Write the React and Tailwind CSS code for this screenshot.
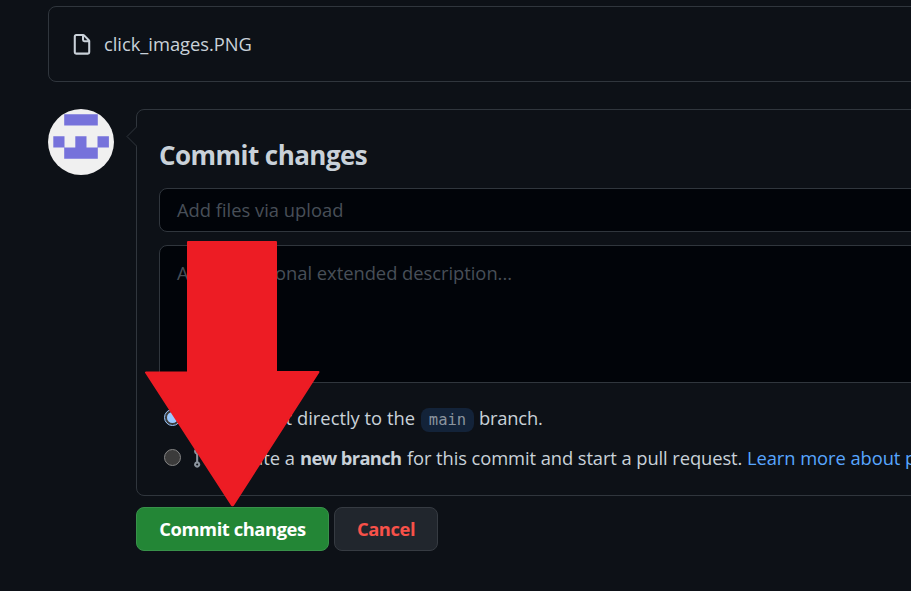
const sans = "font-['Open_Sans','Noto_Sans',sans-serif]";

function FileIcon() {
  return (
    <svg className="mt-px h-[22px] w-[22px] shrink-0" viewBox="0 0 16 16" fill="#c9d1d9">
      <path d="M3.75 1.5a.25.25 0 00-.25.25v11.5c0 .138.112.25.25.25h8.5a.25.25 0 00.25-.25V6H9.75A1.75 1.75 0 018 4.25V1.5H3.75zm5.75.56v2.19c0 .138.112.25.25.25h2.19L9.5 2.06zM2 1.75C2 .784 2.784 0 3.75 0h5.086c.464 0 .909.184 1.237.513l3.414 3.414c.329.328.513.773.513 1.237v8.086A1.75 1.75 0 0112.25 15h-8.5A1.75 1.75 0 012 13.25V1.75z" />
    </svg>
  );
}

function CommitIcon() {
  return (
    <svg className="h-[22px] w-[22px] shrink-0" viewBox="0 0 16 16" fill="#8b949e">
      <path d="M11.93 8.5a4.002 4.002 0 0 1-7.86 0H.75a.75.75 0 0 1 0-1.5h3.32a4.002 4.002 0 0 1 7.86 0h3.32a.75.75 0 0 1 0 1.5Zm-1.43-.75a2.5 2.5 0 1 0-5 0 2.5 2.5 0 0 0 5 0Z" />
    </svg>
  );
}

function PullRequestIcon() {
  return (
    <svg className="h-[22px] w-[22px] shrink-0" viewBox="0 0 16 16" fill="#8b949e">
      <path d="M1.5 3.25a2.25 2.25 0 1 1 3 2.122v5.256a2.251 2.251 0 1 1-1.5 0V5.372A2.25 2.25 0 0 1 1.5 3.25Zm5.677-.177L9.573.677A.25.25 0 0 1 10 .854V2.5h1A2.5 2.5 0 0 1 13.5 5v5.628a2.251 2.251 0 1 1-1.5 0V5a1 1 0 0 0-1-1h-1v1.646a.25.25 0 0 1-.427.177L7.177 3.427a.25.25 0 0 1 0-.354ZM3.75 2.5a.75.75 0 1 0 0 1.5.75.75 0 0 0 0-1.5Zm0 9.5a.75.75 0 1 0 0 1.5.75.75 0 0 0 0-1.5Zm8.25.75a.75.75 0 1 0 1.5 0 .75.75 0 0 0-1.5 0Z" />
    </svg>
  );
}

function Avatar() {
  return (
    <svg className="h-[66px] w-[66px] shrink-0 rounded-full bg-[#f0f0f0]" viewBox="0 0 66 66" fill="#7672db">
      <path d="M16.200 5.300h33.600v11.200h-33.600zM5.300 27.300h11.200v11.200h-11.200zM27.300 27.300h11.200v11.200h-11.200zM49.500 27.300h11.400v11.200h-11.400zM16.200 38.500h33.600v11.200h-33.600z" />
    </svg>
  );
}

function Arrow() {
  return (
    <svg className="absolute left-[145px] top-[241px] h-[266px] w-[175px]" viewBox="0 0 175 266" fill="#ed1c24" stroke="#ed1c24" strokeWidth="2" strokeLinejoin="round">
      <path d="M43 1H131V131H173.500L88 264.200H87L1 131.500H43Z" />
    </svg>
  );
}

export default function App() {
  return (
    <div className={`relative h-[591px] w-[911px] overflow-hidden bg-[#0d1117] pl-12 pt-1.5 text-[18.35px] leading-7 text-[#c9d1d9] ${sans}`}>
      <div className="flex h-[76px] w-[900px] items-center rounded-lg border border-[#30363d] pl-[22px]">
        <FileIcon />
        <span className="ml-[11px] whitespace-nowrap tracking-[-0.03px]">click_images.PNG</span>
      </div>

      <div className="mt-[27px] flex w-[1000px] items-start">
        <Avatar />
        <main className="ml-[22px] w-[900px]">
          <section className="relative h-[387px] rounded-lg border border-[#30363d] pl-[22px] pt-[26px]">
            <svg className="absolute -left-[11px] top-[16px] h-[22px] w-[12px]" viewBox="0 0 12 22" fill="#0d1117">
              <path d="M12 0L10.500 1L1 10.500L10.500 20L12 22Z" />
              <path d="M10.500 1L1 10.500L10.500 20" fill="none" stroke="#30363d" />
            </svg>
            <h3 className="h-[38px] whitespace-nowrap text-[26px] font-bold leading-[38px] tracking-[-0.55px]">Commit changes</h3>
            <div className="mt-[14px] flex h-[44px] items-center rounded-lg border border-[#30363d] bg-[#010409] pl-[17px] text-[#484f58]">
              <span className="whitespace-nowrap">Add files via upload</span>
            </div>
            <div className="mt-[13px] h-[138px] rounded-lg border border-[#30363d] bg-[#010409] pl-[17px] pt-[13px] text-[#484f58]">
              <span className="whitespace-nowrap tracking-[-0.03px]">Add an optional extended description...</span>
            </div>
            <div className="mt-[21px] flex h-7 items-center pl-[5px]">
              <span className="mb-px flex h-[17px] w-[17px] shrink-0 items-center justify-center rounded-full border-[1.5px] border-[#99c8ff] bg-[#3b3b3b]">
                <span className="h-[11px] w-[11px] rounded-full bg-[#99c8ff]" />
              </span>
              <span className="ml-[11px] flex w-[100px] items-center justify-between whitespace-nowrap"><CommitIcon />Commit</span>
              <span className="ml-[5px] w-[118px] whitespace-nowrap">directly to the</span>
              <code className="ml-[6px] mt-[3px] flex h-6 w-[53px] items-center justify-center rounded-lg bg-[#132339] pt-px font-['DejaVu_Sans_Mono',monospace] text-[15.500px] text-[#8b949e]">main</code>
              <span className="ml-[5px] tracking-[-0.2px]">branch.</span>
            </div>
            <div className="mt-3 flex h-7 items-center pl-[5px]">
              <span className="mb-px h-[17px] w-[17px] shrink-0 rounded-full border-[1.5px] border-[#858585] bg-[#3b3b3b]" />
              <span className="ml-[11px] flex w-[103px] items-center justify-between whitespace-nowrap"><PullRequestIcon />Create a</span>
              <strong className="ml-[5px] w-[102px] whitespace-nowrap font-bold tracking-[-0.65px]">new branch</strong>
              <span className="ml-[5px] w-[335px] whitespace-nowrap tracking-[-0.09px]">for this commit and start a pull request.</span>
              <a className="ml-[5px] whitespace-nowrap tracking-[-0.07px] text-[#58a6ff]">Learn more about pull requests.</a>
            </div>
          </section>
          <div className="mt-[11px] flex gap-[5px] font-bold tracking-[-0.42px]">
            <button className="h-[44px] w-[193px] whitespace-nowrap rounded-lg border border-[#38914a] bg-[#238636] text-white">Commit changes</button>
            <button className="h-[44px] w-[104px] rounded-lg border border-[#363b42] bg-[#21262d] text-[#f85149]">Cancel</button>
          </div>
        </main>
      </div>
      <Arrow />
    </div>
  );
}
